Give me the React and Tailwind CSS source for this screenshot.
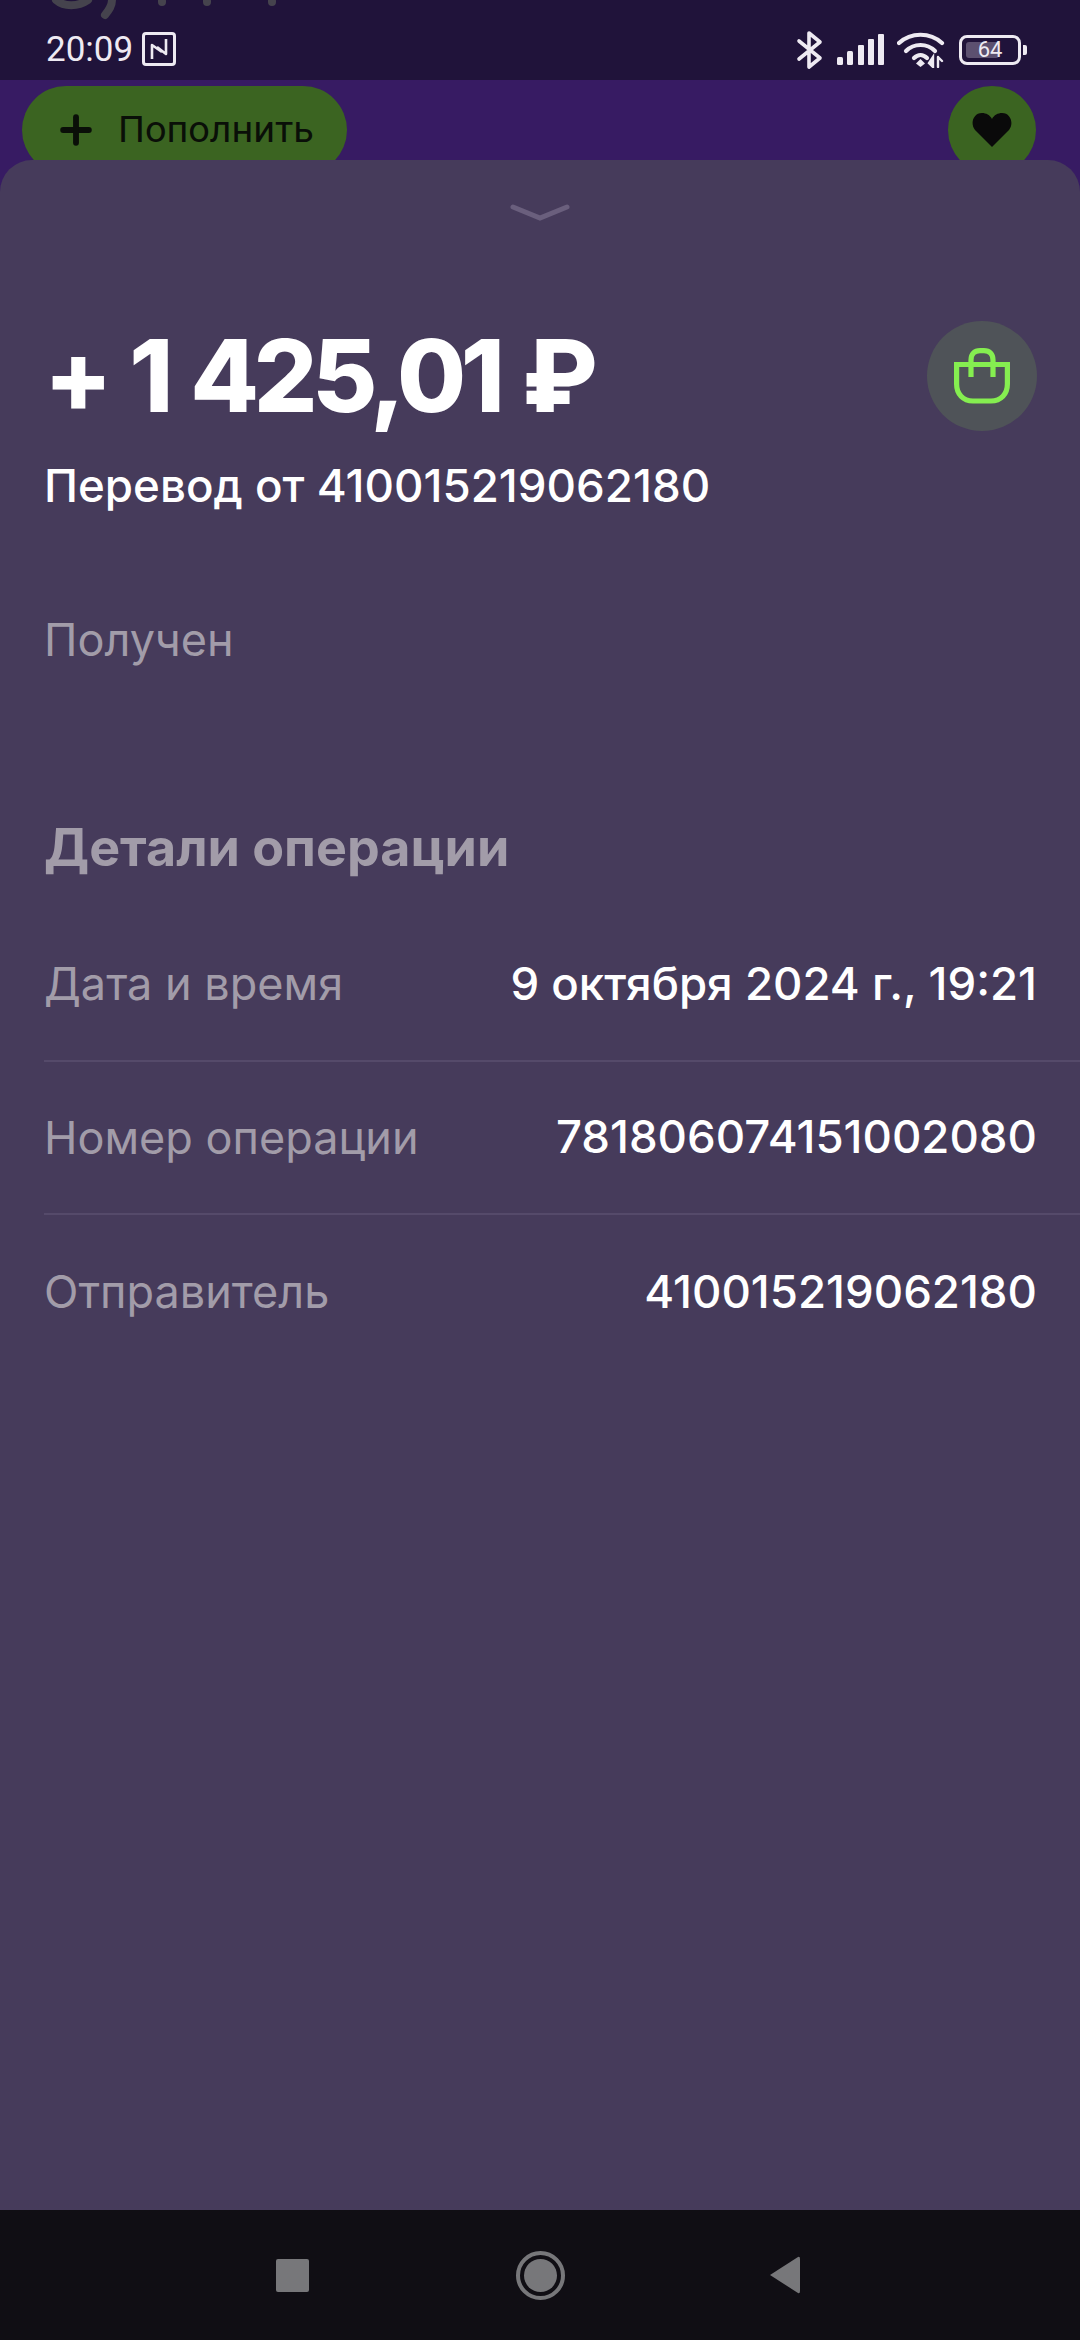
import React from "react";
import { Plus } from "lucide-react";

const rows = [
  { label: "Дата и время", value: "9 октября 2024 г., 19:21" },
  { label: "Номер операции", value: "781806074151002080" },
  { label: "Отправитель", value: "410015219062180" },
];

const StatusIcons = () => (
  <div className="flex items-center">
    {/* bluetooth */}
    <svg width="28" height="40" viewBox="0 0 28 40" fill="none" stroke="#eeeaf2" strokeWidth="3.6" strokeLinecap="round" strokeLinejoin="round">
      <path d="M3 11 L24 28 L13 37 V3 L24 12 L3 29" />
    </svg>
    {/* signal */}
    <svg className="ml-[13px]" width="48" height="32" viewBox="0 0 48 32" fill="#eeeaf2">
      <rect x="0" y="23" width="6" height="8" rx="1.5" />
      <rect x="10" y="17" width="6" height="14" rx="1.5" />
      <rect x="21" y="11" width="6" height="20" rx="1" />
      <rect x="31" y="5" width="6" height="26" rx="1" />
      <rect x="41" y="0" width="6" height="31" rx="1" />
    </svg>
    {/* wifi */}
    <svg className="ml-[12px]" width="48" height="36" viewBox="0 0 48 36" fill="none" stroke="#eeeaf2" strokeWidth="4.2" strokeLinecap="round">
      <path d="M2 11 C14 0 33 0 45 11" />
      <path d="M9 19 C17 11 30 11 38 19" />
      <path d="M17 26 C21 22 26 22 30 26" />
      <path d="M23.5 27 L28 31.5 L23.5 35 L19 31.5 Z" fill="#eeeaf2" stroke="none" />
      <path d="M36 25 V35 L32 31 Z M41 25 V35 M41 25 L45 29" fill="#eeeaf2" strokeWidth="2.4" />
    </svg>
    {/* battery */}
    <div className="ml-[14px] flex items-center">
      <div className="relative w-[62px] h-[30px] rounded-[8px] border-[3px] border-[#eeeaf2] flex items-center justify-center">
        <div className="absolute left-[4px] top-[4px] bottom-[4px] w-[33px] rounded-[3px] bg-[#5c5070]" />
        <span className="relative text-[22px] leading-none text-[#eeeaf2] font-['Roboto',sans-serif]">64</span>
      </div>
      <div className="ml-[2px] w-[4px] h-[10px] rounded-r-[2px] bg-[#eeeaf2]" />
    </div>
  </div>
);

export default function App() {
  return (
    <div className="relative w-[1080px] h-[2340px] flex flex-col overflow-hidden bg-[#463b5b] font-['Inter',sans-serif]">
      {/* status bar */}
      <div className="relative h-[80px] shrink-0 bg-[#20133a] flex items-center justify-between pt-[20px] pl-[46px] pr-[53px]">
        {/* cut off title of the page under the status bar */}
        <svg className="absolute left-[50px] top-0" width="240" height="22" viewBox="0 0 240 22" fill="none" stroke="#45434d" strokeWidth="8" strokeLinecap="round">
          <path d="M6 0 C14 7 28 7 38 0" />
          <path d="M55 15 C59 10 62 6 62 0" />
          <path d="M112 1 V2 M157 1 V2 M222 1 V2" />
        </svg>
        <div className="relative flex items-center mt-[-2px]">
          <span className="text-[35px] leading-none text-[#eeeaf2] font-['Roboto',sans-serif]">20:09</span>
          <div className="ml-[9px] w-[34px] h-[34px] rounded-[4px] border-[3px] border-[#eeeaf2] flex items-center justify-center">
            <svg width="22" height="22" viewBox="0 0 22 22" fill="none" stroke="#eeeaf2" strokeWidth="2.6" strokeLinejoin="round">
              <path d="M4 21 V7 L14 14" />
              <path d="M18 1 V16 L9 9" />
            </svg>
          </div>
        </div>
        <StatusIcons />
      </div>

      {/* page behind the sheet */}
      <div className="h-[80px] shrink-0 bg-[#371b63] flex items-start justify-between pt-[6px] pl-[22px] pr-[44px] overflow-hidden">
        <div className="h-[88px] w-[325px] shrink-0 rounded-full bg-[#3b6421] flex items-center pl-[32px]">
          <Plus size={44} strokeWidth={3.2} color="#0a0f08" />
          <span className="ml-[20px] text-[37.8px] leading-none text-[#0a0f08] font-['Roboto',sans-serif]">Пополнить</span>
        </div>
        <div className="h-[88px] w-[88px] shrink-0 rounded-full bg-[#3b6421] flex items-center justify-center">
          <svg width="40" height="34" viewBox="0 0 40 34" fill="#0a0a0a">
            <path d="M20 34 L3 17 C-2 11 1 0 10 0 C14 0 18 2 20 6 C22 2 26 0 30 0 C39 0 42 11 37 17 Z" />
          </svg>
        </div>
      </div>

      {/* sheet */}
      <div className="relative flex-1">
        <div className="absolute left-0 right-0 top-0 h-[40px] bg-[#371b63]" />
        <div className="absolute inset-0 bg-[#463b5b] rounded-t-[32px]" />
        <div className="relative flex flex-col h-full">
          <svg className="self-center mt-[43px]" width="60" height="20" viewBox="0 0 60 20" fill="none" stroke="#6a5f7d" strokeWidth="5" strokeLinecap="round">
            <path d="M3 4 L30 15 L57 4" />
          </svg>

          <div className="flex items-center justify-between pl-[44px] pr-[43px] mt-[98px]">
            <span className="text-[100px] leading-[110px] font-extrabold text-white tracking-[-5.3px] [word-spacing:5.5px] whitespace-nowrap">+ 1 425,01 ₽</span>
            <div className="w-[110px] h-[110px] rounded-full bg-[#4f5358] flex items-center justify-center">
              <svg width="56" height="56" viewBox="0 0 56 56" fill="none" stroke="#85ee50" strokeWidth="5.2">
                <path d="M2.6 16.5 H53.4 V36 C53.4 46 47 53 37 53 H19 C9 53 2.6 46 2.6 36 Z" />
                <path d="M17 29 V12 C17 6 20.5 2.6 26 2.6 H30 C35.5 2.6 39 6 39 12 V29" />
              </svg>
            </div>
          </div>

          <div className="pl-[44px] mt-[27px] text-[45.7px] leading-[56px] font-medium text-white">Перевод от 410015219062180</div>
          <div className="pl-[44px] mt-[98px] text-[45px] leading-[56px] text-[#a29ca9]">Получен</div>

          <div className="pl-[44px] mt-[150px] text-[52px] leading-[60px] font-bold text-[#a29ca9]">Детали операции</div>

          <div className="pl-[44px] mt-[30px] flex flex-col">
            {rows.map((row, index) => (
              <div
                key={row.label}
                className={`h-[153.5px] pr-[43px] flex items-center justify-between ${
                  index < rows.length - 1 ? "border-b-2 border-[#554a6a]" : ""
                }`}
              >
                <span className="text-[45px] text-[#a29ca9]">{row.label}</span>
                <span className="text-[45.6px] text-white font-[450]">{row.value}</span>
              </div>
            ))}
          </div>
        </div>
      </div>

      {/* nav bar */}
      <div className="h-[130px] shrink-0 bg-[#100e14] flex items-center pl-[276px]">
        <div className="w-[33px] h-[33px] rounded-[2px] bg-[#77777a]" />
        <div className="ml-[207px] w-[49px] h-[49px] rounded-full border-[4px] border-[#77777a] flex items-center justify-center">
          <div className="w-[33px] h-[33px] rounded-full bg-[#77777a]" />
        </div>
        <svg className="ml-[204px]" width="32" height="38" viewBox="0 0 32 38" fill="#77777a">
          <path d="M1 19 L29 1 Q31 0 31 3 V35 Q31 38 29 37 Z" />
        </svg>
      </div>
    </div>
  );
}
